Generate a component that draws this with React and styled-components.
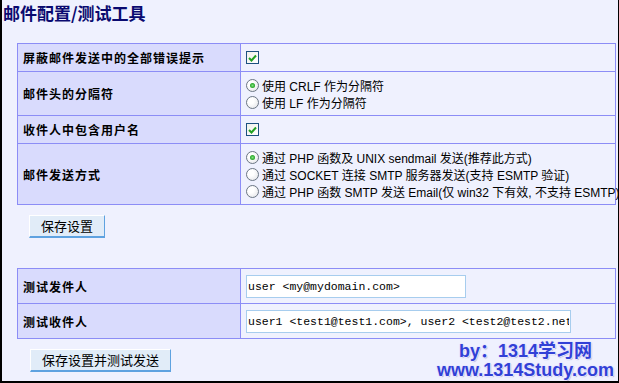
import React from 'react';
import styled, { createGlobalStyle } from 'styled-components';

const GlobalStyle = createGlobalStyle`
    html, body {
        margin: 0;
        padding: 0;
        background: #ffffff;
    }
`;

const settingsRows = [
    { label: '屏蔽邮件发送中的全部错误提示', type: 'check' },
    { label: '邮件头的分隔符', type: 'radio', options: ['使用 CRLF 作为分隔符', '使用 LF 作为分隔符'] },
    { label: '收件人中包含用户名', type: 'check' },
    {
        label: '邮件发送方式',
        type: 'radio',
        options: [
            '通过 PHP 函数及 UNIX sendmail 发送(推荐此方式)',
            '通过 SOCKET 连接 SMTP 服务器发送(支持 ESMTP 验证)',
            '通过 PHP 函数 SMTP 发送 Email(仅 win32 下有效, 不支持 ESMTP)',
        ],
    },
];

const testRows = [
    { label: '测试发件人', value: 'user <my@mydomain.com>', width: 220 },
    { label: '测试收件人', value: 'user1 <test1@test1.com>, user2 <test2@test2.net>', width: 325 },
];

function CheckBox() {
    return (
        <Check>
            <svg width="9" height="8" viewBox="0 0 9 8">
                <path d="M1 4 L3.5 6.5 L8 1.5" fill="none" stroke="#21a121" strokeWidth="2" />
            </svg>
        </Check>
    );
}

function App() {
    return (
        <>
            <GlobalStyle />
            <Frame>
                <Title>邮件配置/测试工具</Title>
                <Section>
                    <Table rows="27px 43px 27px 60px">
                        {settingsRows.map((row, idx) => (
                            <React.Fragment key={idx}>
                                <Label>{row.label}</Label>
                                <Value>
                                    {row.type === 'check' ? (
                                        <CheckBox />
                                    ) : (
                                        row.options.map((opt, i) => (
                                            <Option key={i}>
                                                <Radio $checked={i === 0} />
                                                {opt}
                                            </Option>
                                        ))
                                    )}
                                </Value>
                            </React.Fragment>
                        ))}
                    </Table>
                    <Button $top={10} $left={12}>保存设置</Button>
                    <Table rows="34px 34px" $top={30}>
                        {testRows.map((row, idx) => (
                            <React.Fragment key={idx}>
                                <Label>{row.label}</Label>
                                <Value>
                                    <TextInput defaultValue={row.value} $width={row.width} />
                                </Value>
                            </React.Fragment>
                        ))}
                    </Table>
                    <Button $top={10} $left={13}>保存设置并测试发送</Button>
                </Section>
                <Watermark>
                    <div>by：1314学习网</div>
                    <div>www.1314Study.com</div>
                </Watermark>
            </Frame>
        </>
    );
}

export default App;

const Frame = styled.div`
    position: relative;
    width: 619px;
    height: 383px;
    box-sizing: border-box;
    padding-top: 3px;
    background: #eff1fe;
    border-left: 2px solid #000;
    border-right: 1px solid #000;
    border-bottom: 2px solid #000;
    overflow: hidden;
    font-family: "Liberation Sans", "Noto Sans CJK SC", sans-serif;
`;

const Title = styled.h1`
    margin: 0 0 0 1px;
    font-family: "Noto Sans CJK SC", sans-serif;
    font-size: 17px;
    line-height: 20px;
    letter-spacing: 0;
    font-weight: bold;
    color: #0a0a70;
`;

const Section = styled.div`
    margin: 20px 0 0 15px;
`;

const Table = styled.div`
    display: grid;
    grid-template-columns: 222px 374px;
    grid-template-rows: ${p => p.rows};
    gap: 1px;
    padding: 1px;
    width: max-content;
    margin-top: ${p => p.$top || 0}px;
    background: #8c8df6;
`;

const Label = styled.div`
    display: flex;
    align-items: center;
    padding-left: 5px;
    background: #d9dbfd;
    font-family: "Noto Sans CJK SC", sans-serif;
    font-size: 12px;
    font-weight: bold;
    letter-spacing: 1px;
    color: #000;
`;

const Value = styled.div`
    display: flex;
    flex-direction: column;
    justify-content: center;
    padding-left: 5px;
    background: #eff1fe;
    white-space: nowrap;
    font-size: 12px;
    color: #000;
`;

const Option = styled.div`
    display: flex;
    align-items: center;
    height: 17px;
`;

const Radio = styled.span`
    position: relative;
    flex: none;
    width: 11px;
    height: 11px;
    margin-right: 3px;
    border: 1px solid #6b7684;
    border-radius: 50%;
    background: radial-gradient(circle at 35% 35%, #ffffff 30%, #dfe0e4 100%);

    &::after {
        content: '';
        display: ${p => (p.$checked ? 'block' : 'none')};
        position: absolute;
        left: 3px;
        top: 3px;
        width: 5px;
        height: 5px;
        border-radius: 50%;
        background: radial-gradient(circle, #7fe27f 0%, #21a121 70%);
    }
`;

const Check = styled.span`
    display: flex;
    align-items: center;
    justify-content: center;
    width: 11px;
    height: 11px;
    border: 1px solid #1c5180;
    background: linear-gradient(135deg, #f0f0ea, #ffffff);
`;

const TextInput = styled.input`
    box-sizing: border-box;
    width: ${p => p.$width}px;
    height: 23px;
    padding: 0 1px;
    border: 1px solid #a7cdee;
    background: #fff;
    font-family: "Liberation Mono", monospace;
    font-size: 11.5px;
    color: #000;
    outline: none;
`;

const Button = styled.button`
    display: block;
    height: 23px;
    margin: ${p => p.$top}px 0 0 ${p => p.$left}px;
    padding: 0 11px;
    border: 1px solid #ffffff;
    border-right-color: #5ea2e0;
    border-bottom: 2px solid #5ea2e0;
    background: #e1ecf8;
    font-family: "Noto Sans CJK SC", sans-serif;
    font-size: 13px;
    line-height: 20px;
    color: #000;
`;

const Watermark = styled.div`
    position: absolute;
    right: 4px;
    bottom: 1px;
    text-align: center;
    font-family: "Liberation Sans", "Noto Sans CJK SC", sans-serif;
    font-size: 18px;
    font-weight: bold;
    line-height: 19px;
    color: #3140d6;
    text-shadow: 1px 0 0 #e8e8ff, -1px 0 0 #e8e8ff, 0 1px 0 #e8e8ff, 0 -1px 0 #e8e8ff, 1px 1px 1px #9aa0d8;
`;
